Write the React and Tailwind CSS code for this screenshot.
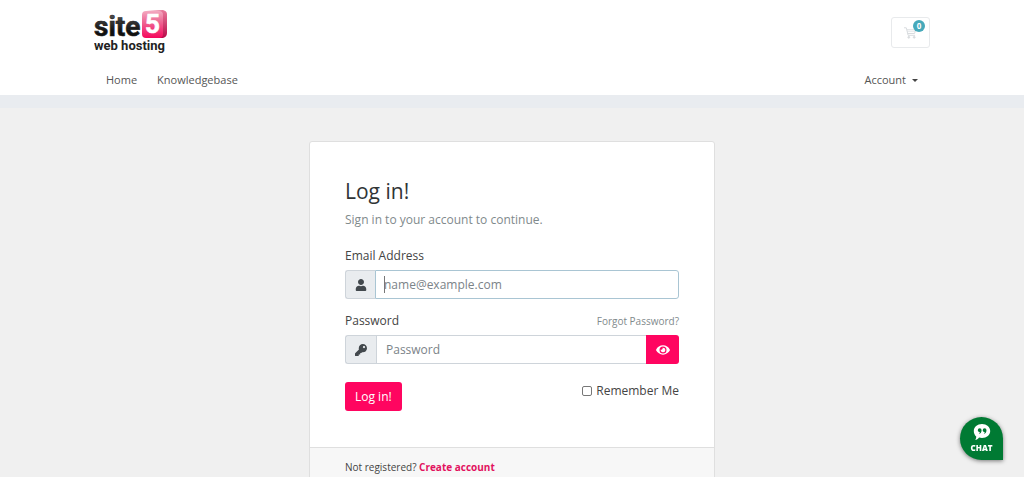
import React from "react";
import { FaUser, FaKey, FaEye } from "react-icons/fa";

function Logo() {
  return (
    <svg width="76" height="46" viewBox="0 0 76 46" role="img" aria-label="site5 web hosting">
      <defs>
        <linearGradient id="ink" x1="0" y1="0" x2="0" y2="1">
          <stop offset="0" stopColor="#666" />
          <stop offset="0.5" stopColor="#111" />
        </linearGradient>
        <linearGradient id="face" x1="0" y1="0" x2="0" y2="1">
          <stop offset="0" stopColor="#f3a9c0" />
          <stop offset="0.35" stopColor="#ee6f99" />
          <stop offset="1" stopColor="#f5085c" />
        </linearGradient>
        <linearGradient id="side" x1="0" y1="0" x2="0" y2="1">
          <stop offset="0" stopColor="#e87a9b" />
          <stop offset="1" stopColor="#b80a48" />
        </linearGradient>
      </defs>
      <path d="M52 1 L69 0 Q73 1 73 4 V23 Q73 27 69 28 L62 28 V3 Z" fill="url(#side)" />
      <rect x="48" y="1" width="21" height="27" rx="4" fill="url(#face)" />
      <text fontFamily="Roboto, sans-serif" fontWeight="700">
        <tspan x="0" y="26" fill="url(#ink)" stroke="#222" strokeWidth="0.6" fontSize="28">site</tspan>
        <tspan x="51" y="23" fill="#fff" stroke="#fff" strokeWidth="0.6" fontSize="26">5</tspan>
        <tspan x="0" y="40" fill="#222" fontSize="13">web hosting</tspan>
      </text>
    </svg>
  );
}

function CartIcon() {
  return (
    <svg width="13" height="12" viewBox="0 0 13 12" fill="none" stroke="#d9dcdf" strokeWidth="1" aria-hidden="true">
      <path d="M0 .8h2.300l1.800 7.500h7" />
      <path d="M2.800 2.800h9l-1.300 3.700h-7" />
      <path d="M3.200 4.600h8" strokeWidth=".6" />
      <circle cx="4.800" cy="10.300" r=".9" fill="#d9dcdf" />
      <circle cx="10.200" cy="10.300" r=".9" fill="#d9dcdf" />
    </svg>
  );
}

function Header() {
  return (
    <header className="bg-white">
      <div className="mx-auto w-full max-w-[836px]">
        <div className="flex h-[65px] items-start justify-between">
          <a href="#home" className="pt-[10px]"><Logo /></a>
          <button type="button" aria-label="Shopping cart" className="relative mt-[17px] flex h-[31px] w-[39px] items-center justify-center rounded-[3px] border border-[#e8eaec] bg-white">
            <CartIcon />
            <span className="absolute right-1 top-[2px] flex size-3 items-center justify-center rounded-full bg-[#46a9ba] text-[8px] font-bold leading-none text-white">0</span>
          </button>
        </div>
        <nav className="flex h-[30px] items-center justify-between px-3 text-[11px] text-[#555]">
          <div className="flex gap-5">
            <a href="#home">Home</a>
            <a href="#knowledgebase">Knowledgebase</a>
          </div>
          <button type="button" className="flex items-center gap-[6px]">
            Account
            <span className="border-x-[3px] border-t-[3px] border-x-transparent border-t-[#444]" />
          </button>
        </nav>
      </div>
    </header>
  );
}

function LoginCard() {
  return (
    <section className="mx-auto w-full max-w-[406px] overflow-hidden rounded-[3px] border border-[#dfdfdf] bg-white">
      <form className="px-[35px] pb-9 pt-9">
        <h1 className="text-[21px] leading-[26px] text-[#303436]">Log in!</h1>
        <p className="mt-[6px] text-[12px] leading-[20px] text-[#7f8a8c]">Sign in to your account to continue.</p>
        <label htmlFor="email" className="mt-4 block text-[12px] leading-[20px] text-[#444]">Email Address</label>
        <div className="relative mt-1 flex h-[29px]">
          <span className="flex w-[30px] items-center justify-center rounded-l-[3px] border border-r-0 border-[#ced4da] bg-[#e9ecef] text-[#42484d]">
            <FaUser size={12} />
          </span>
          <input id="email" type="email" placeholder="name@example.com" className="min-w-0 flex-1 rounded-r-[3px] border border-[#a9c5d3] px-2 text-[12px] text-[#444] outline-none placeholder:text-[#7b8388] placeholder:opacity-100" />
          <span className="absolute left-[39px] top-[6px] h-[17px] w-px bg-[#777]" />
        </div>
        <div className="mt-3 flex h-5 items-center justify-between">
          <label htmlFor="password" className="text-[12px] text-[#444]">Password</label>
          <a href="#forgot" className="text-[10px] text-[#7f8a8c]">Forgot Password?</a>
        </div>
        <div className="mt-1 flex h-[29px]">
          <span className="flex w-[31px] items-center justify-center rounded-l-[3px] border border-r-0 border-[#ced4da] bg-[#e9ecef] text-[#42484d]">
            <FaKey size={12} />
          </span>
          <input id="password" type="password" placeholder="Password" className="min-w-0 flex-1 border border-r-0 border-[#ced4da] px-[9px] text-[12px] text-[#444] outline-none placeholder:text-[#7b8388] placeholder:opacity-100" />
          <button type="button" aria-label="Show password" className="flex w-[33px] items-center justify-center rounded-r-[3px] bg-[#ff0560] text-white">
            <FaEye size={14} />
          </button>
        </div>
        <div className="mt-[18px] flex items-start justify-between">
          <button type="submit" className="h-[29px] rounded-[3px] bg-[#ff0560] px-[10px] text-[12px] text-white">Log in!</button>
          <label className="flex h-[18px] items-center gap-1 text-[12px] text-[#444]">
            <input type="checkbox" className="size-[10px] appearance-none rounded-[2px] border border-[#777] bg-white" />
            Remember Me
          </label>
        </div>
      </form>
      <footer className="border-t border-[#dfdfdf] bg-[#f7f7f7] px-[35px] pb-3 pt-[11px] text-[10px] leading-4 text-[#444]">
        Not registered? <a href="#register" className="font-bold text-[#e2125f]">Create account</a>
      </footer>
    </section>
  );
}

function ChatButton() {
  return (
    <button type="button" className="fixed bottom-[17px] right-[21px] flex size-[43px] flex-col items-center rounded-full rounded-br-none bg-[#007a33] pt-[7px] text-white shadow-[0_1px_4px_rgba(0,0,0,0.5)]">
      <svg width="18" height="17" viewBox="0 0 18 17" aria-hidden="true">
        <path fill="#fff" d="M9 0c4.700 0 8.200 3 8.200 7s-3.500 7-8.200 7c-1 0-2-.1-2.900-.4C5 15 3.600 15.800 2.200 16c.8-1 1.100-2.200 1-3.500C1.700 11.200.8 9.300.8 7 .8 3 4.300 0 9 0z" />
        <path fill="#007a33" d="M4.800 6.200a1.900 1.900 0 1 1 3.800 0c0 2-1 3.200-2.700 3.800.6-.7.900-1.300.9-1.900-1.100 0-2-.8-2-1.900zM9.700 6.200a1.900 1.900 0 1 1 3.800 0c0 2-1 3.200-2.700 3.800.6-.7.900-1.300.9-1.900-1.100 0-2-.8-2-1.900z" />
      </svg>
      <span className="mt-px text-[8px] font-extrabold leading-[12px]">CHAT</span>
    </button>
  );
}

export default function App() {
  return (
    <div className="min-h-screen bg-[#f0f0f0] font-['Open_Sans',sans-serif]">
      <Header />
      <div className="h-[13px] bg-[#e9ecf0]" />
      <main className="pt-[33px]">
        <LoginCard />
      </main>
      <ChatButton />
    </div>
  );
}
